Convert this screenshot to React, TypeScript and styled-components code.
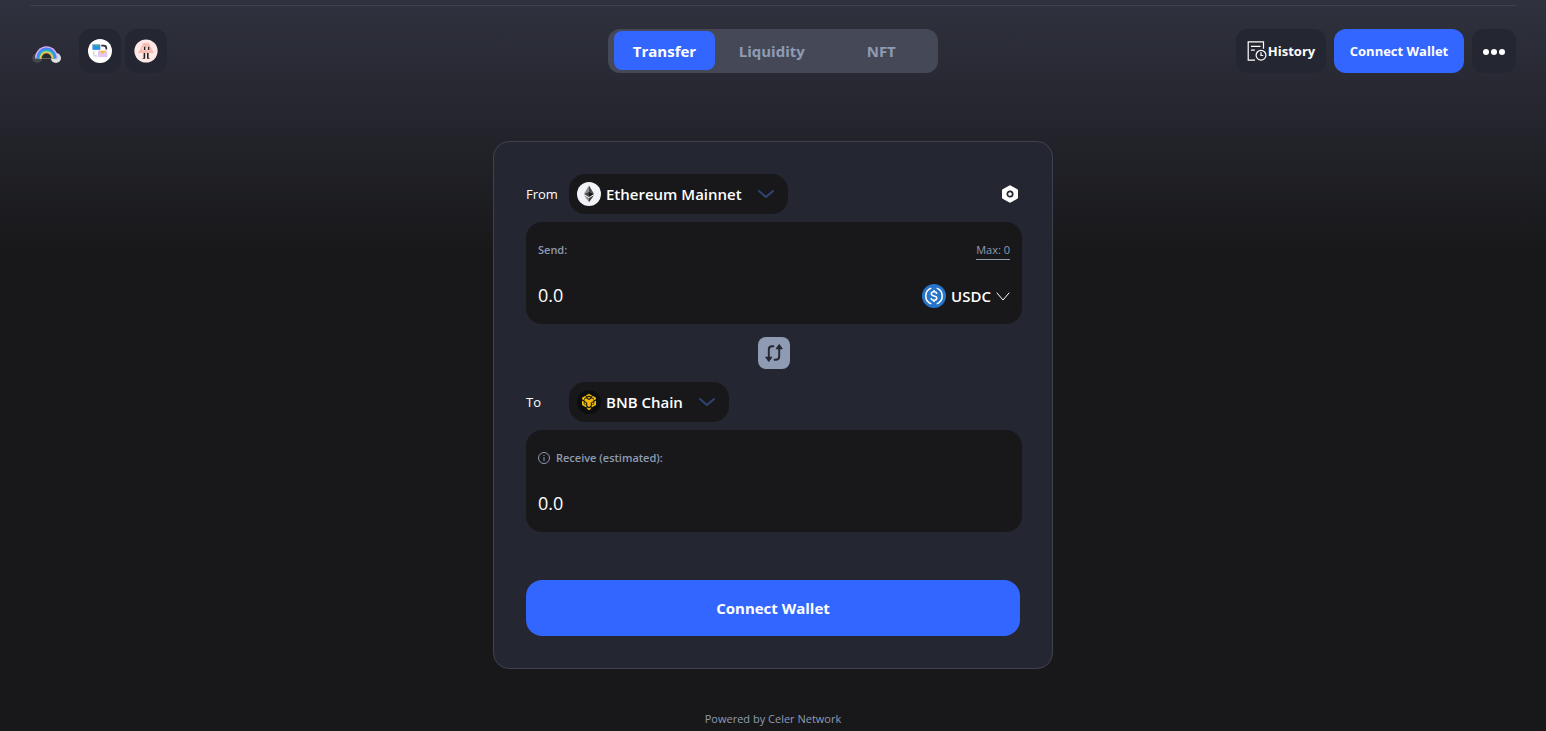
import React, { useState } from "react";
import styled, { createGlobalStyle } from "styled-components";

const GlobalStyle = createGlobalStyle`
  *, *::before, *::after { box-sizing: border-box; }
  body {
    margin: 0;
    min-height: 100vh;
    background: #18181a linear-gradient(180deg, #2f313e 0, #18181a 256px) no-repeat;
    color: #fff;
    font-family: "Open Sans", "Noto Sans", sans-serif;
    font-size: 13px;
  }
  button, input, select { font: inherit; color: inherit; }
  button { cursor: pointer; }
`;

const Page = styled.div`
  display: flex;
  flex-direction: column;
  min-height: 100vh;
  padding: 5px 30px 0;
`;

const Header = styled.header`
  display: grid;
  grid-template-columns: 1fr auto 1fr;
  align-items: center;
  padding-top: 23px;
  border-top: 1px solid #3f414e;
`;

const Group = styled.div<{ $gap: number; $end?: boolean }>`
  display: flex;
  align-items: center;
  justify-content: ${(p) => (p.$end ? "flex-end" : "flex-start")};
  gap: ${(p) => p.$gap}px;
`;

const LogoLink = styled.a`
  display: flex;
  padding: 6px 13px 0 2px;
`;

const DarkButton = styled.button<{ $width: number }>`
  display: flex;
  align-items: center;
  justify-content: center;
  gap: 1px;
  width: ${(p) => p.$width}px;
  height: 44px;
  padding: 0;
  border: 0;
  border-radius: 12px;
  background: #242631;
  font-weight: 700;
`;

const PrimaryButton = styled.button<{ $large?: boolean }>`
  height: ${(p) => (p.$large ? 56 : 44)}px;
  width: ${(p) => (p.$large ? "auto" : "130px")};
  margin: ${(p) => (p.$large ? "48px 2px 0 0" : "0")};
  padding: 0;
  border: 0;
  border-radius: ${(p) => (p.$large ? 16 : 12)}px;
  background: #3366ff;
  font-size: ${(p) => (p.$large ? 15 : 13)}px;
  font-weight: 700;
`;

const Tabs = styled.nav`
  display: grid;
  grid-template-columns: 101px 1fr 1fr;
  gap: 4px;
  width: 330px;
  height: 44px;
  padding: 2px 4px 3px 6px;
  border-radius: 12px;
  background: #444857;
`;

const Tab = styled.button<{ $active: boolean }>`
  padding: 0;
  border: 0;
  border-radius: 8px;
  background: ${(p) => (p.$active ? "#3366ff" : "transparent")};
  color: ${(p) => (p.$active ? "#fff" : "#8f9bb3")};
  font-size: 15px;
  font-weight: 700;
`;

const Card = styled.main`
  display: flex;
  flex-direction: column;
  width: 100%;
  max-width: 560px;
  margin: 68px auto 0;
  padding: 32px 30px 32px 32px;
  border: 1px solid #3f414e;
  border-radius: 16px;
  background: #242631;
`;

const ChainRow = styled.div`
  display: flex;
  align-items: center;
  height: 40px;
`;

const ChainLabel = styled.label`
  width: 43px;
`;

const ChainPill = styled.div`
  display: flex;
  align-items: center;
  height: 40px;
  padding: 0 14px 0 8px;
  border-radius: 16px;
  background: #18181a;
`;

const ChainSelect = styled.select`
  appearance: none;
  margin: 0 16px 0 5px;
  padding: 0;
  border: 0;
  outline: 0;
  background: transparent;
  font-size: 15px;
  font-weight: 600;
`;

const SettingsButton = styled.button`
  display: flex;
  margin: 0 3px 0 auto;
  padding: 0;
  border: 0;
  background: transparent;
`;

const AmountBox = styled.section`
  display: flex;
  flex-direction: column;
  justify-content: space-between;
  height: 102px;
  margin-top: 8px;
  padding: 18px 12px 14px;
  border-radius: 16px;
  background: #18181a;
`;

const AmountRow = styled.div`
  display: flex;
  align-items: center;
  justify-content: space-between;
`;

const AmountLabel = styled.label`
  display: flex;
  align-items: center;
  gap: 6px;
  color: #8f9bb3;
  font-size: 11px;
  font-weight: 600;
  line-height: 20px;
`;

const AmountInput = styled.input`
  flex: 1;
  min-width: 0;
  height: 30px;
  padding: 0;
  border: 0;
  outline: 0;
  background: transparent;
  font-size: 18px;
`;

const MaxButton = styled.button`
  padding: 0;
  border: 0;
  border-bottom: 1px solid #8f9bb3;
  background: transparent;
  color: #8f9bb3;
  font-size: 11px;
  line-height: 18px;
`;

const TokenButton = styled.button`
  display: flex;
  align-items: center;
  gap: 5px;
  padding: 2px 0 0;
  border: 0;
  background: transparent;
  font-size: 15px;
  font-weight: 600;
`;

const SwapButton = styled.button`
  display: flex;
  align-items: center;
  justify-content: center;
  align-self: center;
  width: 32px;
  height: 32px;
  margin: 13px 0;
  padding: 0;
  border: 0;
  border-radius: 8px;
  background: #8f9bb3;
`;

const Footer = styled.footer`
  padding: 41px 0 3px;
  color: #8f9bb3;
  font-size: 11px;
  line-height: 18px;
  text-align: center;
`;

const RainbowLogo = () => (
  <svg width="30" height="20" viewBox="0 0 30 20" fill="none" aria-hidden="true">
    <circle cx="5.300" cy="14" r="5.100" fill="#45474c" />
    <circle cx="23.900" cy="14" r="5.100" fill="#dcdee2" />
    <path d="M3 14.500a11.500 12.200 0 0 1 23 0z" fill="#d9b3f7" />
    <path d="M4.300 14.500a10.200 10.900 0 0 1 20.400 0z" fill="#5a7cf0" />
    <path d="M5.300 14.500a9.200 9.800 0 0 1 18.400 0z" fill="#2f96ee" />
    <path d="M6.800 14.500a7.700 8.200 0 0 1 15.400 0z" fill="#45c8a0" />
    <path d="M7.900 14.500a6.600 7 0 0 1 13.200 0z" fill="#f0d548" />
    <path d="M9.100 14.500a5.400 5.700 0 0 1 10.800 0z" fill="#c9793e" />
    <path d="M9.800 14.500a4.700 4.900 0 0 1 9.400 0z" fill="#292a35" />
  </svg>
);

const BridgeIcon = () => (
  <svg width="24" height="24" viewBox="0 0 24 24" fill="none" aria-hidden="true">
    <circle cx="12" cy="12" r="12" fill="#fff" />
    <path d="M4.300 5.300h8v5.500h-8z" fill="#6f93b8" />
    <path d="M5.200 6.200h6.900v4.400H5.200z" fill="#2390f5" />
    <path d="M6.200 6.200h5.200L8.800 8.600z" fill="#2fb77c" />
    <path d="M13.300 6.700h2.200q2.800 0 2.800 2.600v1.300" stroke="#333" strokeWidth="1.700" />
    <path d="M5.700 12.300v1.900q0 2.800 2.800 2.800h.6" stroke="#dcdcdc" strokeWidth="1.700" />
    <path d="M10 11.800h9.300V18H10z" fill="#e3c6f7" />
    <path d="M11 11.800h7.300l-3.600 3.200z" fill="#f7bf3c" />
  </svg>
);

const MascotIcon = () => (
  <svg width="24" height="24" viewBox="0 0 24 24" aria-hidden="true">
    <circle cx="12" cy="12" r="11.600" fill="#ffe9e7" />
    <path d="M9.300 4h5.400l2 4 3.300 6H4l3.300-6z" fill="#fbb9b3" />
    <ellipse cx="10.200" cy="9.500" rx="1.800" ry="2.100" fill="#fff" />
    <ellipse cx="14.200" cy="9.500" rx="1.800" ry="2.100" fill="#fff" />
    <path d="M9.800 7.700h1.600v3.400H9.800zM13.800 7.700h1.600v3.400h-1.600zM9.600 14h1.600v5.700H8.600v-.8h1zM13 14h1.600v4.900h1v.8H13z" fill="#2a2222" />
  </svg>
);

const HistoryIcon = () => (
  <svg width="20" height="20" viewBox="0 0 20 20" fill="none" stroke="#fff" strokeWidth="1.200" aria-hidden="true">
    <path d="M8 19.200H1.200V.8h15.300v7M4 5.300h9.500M4 9.200h3.800" />
    <circle cx="14" cy="14.200" r="4.900" />
    <path d="M14 11.300v3.200h2.200" />
  </svg>
);

const MoreIcon = () => (
  <svg width="24" height="8" viewBox="0 0 24 8" fill="#fff" aria-hidden="true">
    <circle cx="4" cy="5" r="3" />
    <circle cx="12" cy="5" r="3" />
    <circle cx="20" cy="5" r="3" />
  </svg>
);

const EthereumIcon = () => (
  <svg width="24" height="24" viewBox="0 0 24 24" aria-hidden="true">
    <circle cx="12" cy="12" r="12" fill="#f2f3f8" />
    <path d="M12 3.500 7 12l5-2.300z" fill="#8a8a8a" />
    <path d="M12 3.500 17 12l-5-2.300z" fill="#4a4a4a" />
    <path d="M12 9.700 7 12l5 3z" fill="#454545" />
    <path d="M12 9.700 17 12l-5 3z" fill="#151515" />
    <path d="M7 13.200 12 20.300v-4.200z" fill="#8a8a8a" />
    <path d="M17 13.200 12 20.300v-4.200z" fill="#3c3c3c" />
  </svg>
);

const BnbIcon = () => (
  <svg width="24" height="24" viewBox="0 0 24 24" fill="none" aria-hidden="true">
    <circle cx="12" cy="12" r="12" fill="#0b0e11" />
    <g fill="#f0b90b">
      <path d="M12 3.800l3.300 1.900-1.400.8L12 5.500l-1.900 1-1.400-.8z" />
      <path d="M12 6.800l1.700 1L12 8.800l-1.700-1z" />
      <path d="M8 6l1.600.9-2.400 1.500v1.900L5 9.300V7.700z" />
      <path d="M16 6l-1.600.9 2.400 1.500v1.900L19 9.300V7.700z" />
      <path d="M7.500 9.200l1.700-.9L12 9.900l2.800-1.600 1.700.9V11l-2.700 1.700v3.100L12 16.900l-1.800-1.100v-3.100L7.500 11z" />
      <path d="M5 10.400l1.800 1v2.700l2.600 1.500v1.900L5 15z" />
      <path d="M19 10.400l-1.800 1v2.700l-2.600 1.500v1.900L19 15z" />
      <path d="M7.500 12.200l1.700.9v1.700l-1.700-.9zM16.500 12.200l-1.700.9v1.700l1.700-.9z" />
      <path d="M10.200 17.200l1.800 1 1.800-1v1.900L12 20.200l-1.800-1.100z" />
    </g>
  </svg>
);

const UsdcIcon = () => (
  <svg width="24" height="24" viewBox="0 0 24 24" fill="none" stroke="#fff" strokeWidth="1.500" aria-hidden="true">
    <circle cx="12" cy="12" r="12" fill="#2775ca" stroke="none" />
    <path d="M9.300 4.100a8.400 8.400 0 0 0 0 15.800M14.700 4.100a8.400 8.400 0 0 1 0 15.800" />
    <path d="M14.800 9.800c-.2-1.300-1.200-2-2.800-2s-2.700.8-2.700 2c0 1.400 1.200 1.800 2.700 2.100s2.800.8 2.800 2.200c0 1.300-1.200 2.100-2.800 2.100s-2.800-.8-2.900-2.200M12 6v2M12 16v2" />
  </svg>
);

type ChevronProps = { color: string; width: number; height: number; weight: number };

const Chevron = ({ color, width, height, weight }: ChevronProps) => (
  <svg width={width} height={height} viewBox={`0 0 ${width} ${height}`} fill="none" aria-hidden="true">
    <path
      d={`M1 1 ${width / 2} ${height - 1} ${width - 1} 1`}
      stroke={color}
      strokeWidth={weight}
      strokeLinecap="round"
      strokeLinejoin="round"
    />
  </svg>
);

const SettingsIcon = () => (
  <svg width="18" height="18" viewBox="0 0 18 18" aria-hidden="true">
    <path d="M9 1.500 15.800 5.300v7.400L9 16.500 2.200 12.700V5.300z" fill="#fff" stroke="#fff" strokeWidth="2.400" strokeLinejoin="round" />
    <circle cx="9" cy="9" r="2.700" fill="#fff" stroke="#242631" strokeWidth="1.700" />
  </svg>
);

const SwapIcon = () => (
  <svg width="20" height="20" viewBox="0 0 20 20" fill="none" stroke="#242631" strokeWidth="1.900" aria-hidden="true">
    <path d="M9.400 3.300H8.200Q4.800 3.300 4.800 6.500V15M10.600 16.700h1.200Q15.200 16.700 15.200 13.500V5" strokeLinecap="round" />
    <path d="M1.700 14.200h6.200l-3.100 4.300zM12.100 5.800h6.200l-3.100-4.300z" fill="#242631" strokeWidth="1" strokeLinejoin="round" />
  </svg>
);

const InfoIcon = () => (
  <svg width="12" height="12" viewBox="0 0 12 12" fill="none" stroke="#8f9bb3" aria-hidden="true">
    <circle cx="6" cy="6" r="5.500" />
    <path d="M6 5v4M6 3v1" />
  </svg>
);

const tabs = ["Transfer", "Liquidity", "NFT"];

export default function App() {
  const [active, setActive] = useState("Transfer");
  const [amount, setAmount] = useState("0.0");

  return (
    <>
      <GlobalStyle />
      <Page>
        <Header>
          <Group $gap={4}>
            <LogoLink href="#" aria-label="Home">
              <RainbowLogo />
            </LogoLink>
            <DarkButton $width={42} aria-label="Bridge">
              <BridgeIcon />
            </DarkButton>
            <DarkButton $width={42} aria-label="Mascot">
              <MascotIcon />
            </DarkButton>
          </Group>
          <Tabs>
            {tabs.map((name) => (
              <Tab key={name} $active={name === active} onClick={() => setActive(name)}>
                {name}
              </Tab>
            ))}
          </Tabs>
          <Group $gap={8} $end>
            <DarkButton $width={90}>
              <HistoryIcon />
              History
            </DarkButton>
            <PrimaryButton>Connect Wallet</PrimaryButton>
            <DarkButton $width={44} aria-label="More">
              <MoreIcon />
            </DarkButton>
          </Group>
        </Header>

        <Card>
          <ChainRow>
            <ChainLabel htmlFor="from-chain">From</ChainLabel>
            <ChainPill>
              <EthereumIcon />
              <ChainSelect id="from-chain">
                <option>Ethereum Mainnet</option>
              </ChainSelect>
              <Chevron color="#2f4374" width={16} height={8} weight={2} />
            </ChainPill>
            <SettingsButton aria-label="Settings">
              <SettingsIcon />
            </SettingsButton>
          </ChainRow>
          <AmountBox>
            <AmountRow>
              <AmountLabel htmlFor="send">Send:</AmountLabel>
              <MaxButton>Max: 0</MaxButton>
            </AmountRow>
            <AmountRow>
              <AmountInput id="send" value={amount} onChange={(e) => setAmount(e.target.value)} />
              <TokenButton>
                <UsdcIcon />
                USDC
                <Chevron color="#fff" width={14} height={9} weight={1} />
              </TokenButton>
            </AmountRow>
          </AmountBox>

          <SwapButton aria-label="Swap direction">
            <SwapIcon />
          </SwapButton>

          <ChainRow>
            <ChainLabel htmlFor="to-chain">To</ChainLabel>
            <ChainPill>
              <BnbIcon />
              <ChainSelect id="to-chain">
                <option>BNB Chain</option>
              </ChainSelect>
              <Chevron color="#2f4374" width={16} height={8} weight={2} />
            </ChainPill>
          </ChainRow>
          <AmountBox>
            <AmountRow>
              <AmountLabel htmlFor="receive">
                <InfoIcon />
                Receive (estimated):
              </AmountLabel>
            </AmountRow>
            <AmountRow>
              <AmountInput id="receive" value={amount} readOnly />
            </AmountRow>
          </AmountBox>

          <PrimaryButton $large>Connect Wallet</PrimaryButton>
        </Card>

        <Footer>Powered by Celer Network</Footer>
      </Page>
    </>
  );
}
